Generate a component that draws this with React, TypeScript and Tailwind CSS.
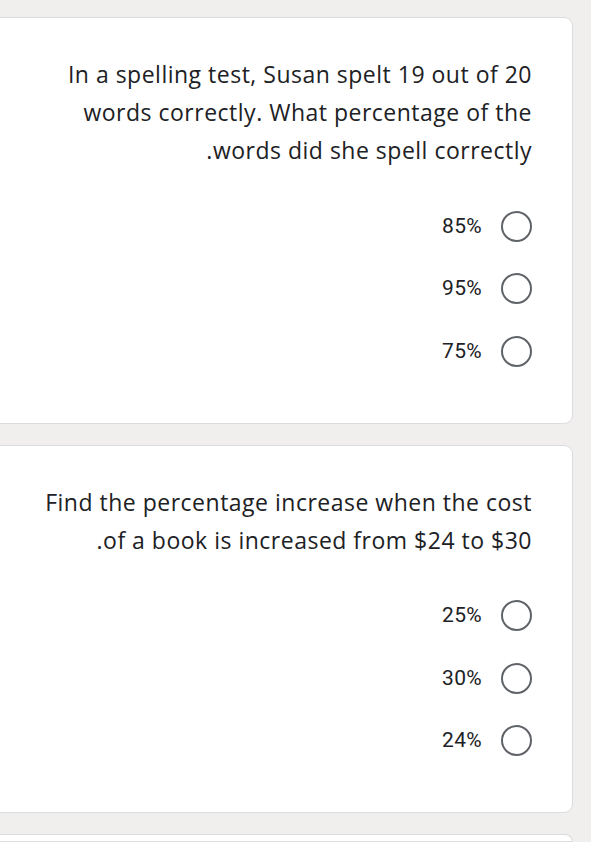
import React from "react";

type Question = {
  text: string;
  options: string[];
};

const questions: Question[] = [
  {
    text: "In a spelling test, Susan spelt 19 out of 20 words correctly. What percentage of the words did she spell correctly.",
    options: ["85%", "95%", "75%"],
  },
  {
    text: "Find the percentage increase when the cost of a book is increased from $24 to $30.",
    options: ["25%", "30%", "24%"],
  },
];

const Radio: React.FC = () => (
  <span className="block w-[31px] h-[31px] rounded-full border-[2.5px] border-[#5f6368] shrink-0" />
);

const QuestionCard: React.FC<{ q: Question }> = ({ q }) => (
  <div
    dir="rtl"
    className="bg-white border-y border-r border-[#dadce0] rounded-r-[9px] pr-[40px] pl-[27px] pt-[37px] pb-[40px]"
  >
    <p className="text-[23px] tracking-[0.5px] leading-[38px] text-[#202124] font-['Open_Sans',sans-serif]">
      {q.text}
    </p>
    <div className="mt-[26px] flex flex-col">
      {q.options.map((opt) => (
        <label key={opt} className="h-[62.5px] flex items-center gap-[19px]">
          <Radio />
          <span className="text-[21px] tracking-[0.3px] text-[#202124] font-['Roboto',sans-serif]">
            {opt}
          </span>
        </label>
      ))}
    </div>
  </div>
);

const App: React.FC = () => {
  return (
    <div className="h-screen bg-[#f1eeee] pt-[17px] pr-[18px] flex flex-col gap-[21px] overflow-hidden">
      {questions.map((q, i) => (
        <QuestionCard key={i} q={q} />
      ))}
      <div className="flex-1 bg-white border-y border-r border-[#dadce0] rounded-tr-[9px]" />
    </div>
  );
};

export default App;
